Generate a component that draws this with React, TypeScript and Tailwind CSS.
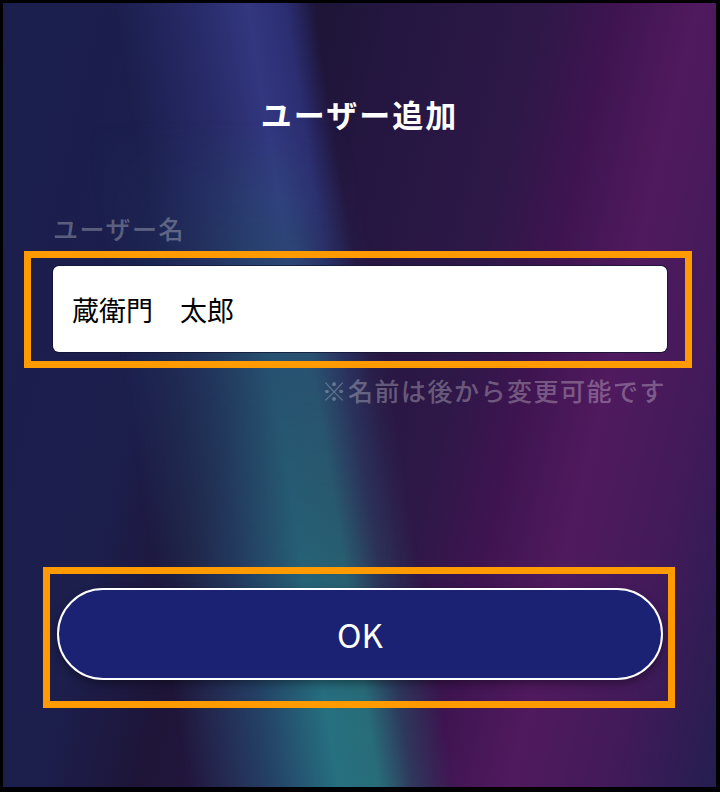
import React from 'react';

const font = 'font-["Noto_Sans_CJK_JP","Noto_Sans",sans-serif]';

const AddUserPage = () => {
  return (
    <div className="w-[720px] h-[792px] bg-black">
      <div
        className={`relative w-[720px] h-[792px] overflow-hidden border-t-[3px] border-l-[3px] border-r-[4px] border-b-[5px] border-black ${font}`}
      >
        {/* background layers */}
        <div className="absolute inset-0 bg-[linear-gradient(103.5deg,#1b1f4e_0%,#1c1e4c_25%,#1e1538_36%,#241640_44%,#2e1848_60%,#3e1450_68%,#501a5e_77%,#421a5a_88%,#241e50_100%)]" />
        <div className="absolute inset-0 bg-[linear-gradient(81deg,transparent_28%,rgba(48,52,124,0.55)_37%,#32377f_44%,#2c2e72_48.5%,transparent_52%)] [mask-image:linear-gradient(to_bottom,black_0%,black_25%,rgba(0,0,0,0.5)_50%,transparent_75%)]" />
        <div className="absolute inset-0 bg-[linear-gradient(81deg,transparent_22%,rgba(36,72,108,0.85)_32%,#267080_40%,#286c78_45%,rgba(45,64,96,0.8)_49%,transparent_54%)] [mask-image:linear-gradient(to_bottom,transparent_15%,rgba(0,0,0,0.6)_45%,black_90%)]" />

        {/* content */}
        <div className="relative flex flex-col">
          <h1 className="mt-[91px] text-center text-[31px] leading-[40px] font-bold tracking-[2px] text-white">
            ユーザー追加
          </h1>

          <p className="mt-[78px] ml-[50px] text-[25px] leading-[32px] font-medium tracking-[1.5px] text-white/30">
            ユーザー名
          </p>

          <div className="mt-[7px] ml-[21px] w-[668px] border-[7px] border-[#ff9a00] pt-[8px] pb-[9px] pl-[22px] pr-[18px]">
            <div className="h-[86px] flex items-center rounded-[6px] bg-white pl-[19px] shadow-[0_0_0_1px_rgba(16,18,48,0.7)]">
              <span className="text-[27px] leading-none text-black">蔵衛門　太郎</span>
            </div>
          </div>

          <p className="mt-[6px] mr-[50px] text-right text-[25px] leading-[32px] font-medium tracking-[1.5px] text-white/30">
            ※名前は後から変更可能です
          </p>

          <div className="mt-[161px] ml-[40px] w-[632px] border-[7px] border-[#ff9a00] pt-[14px] pb-[21px] pl-[7px] pr-[5px]">
            <button className="w-full h-[92px] rounded-full border-2 border-white bg-[#1b2273] shadow-[0_4px_8px_rgba(0,0,0,0.35)] text-[33px] leading-none text-white">
              OK
            </button>
          </div>
        </div>
      </div>
    </div>
  );
};

export default function App() {
  return <AddUserPage />;
}
